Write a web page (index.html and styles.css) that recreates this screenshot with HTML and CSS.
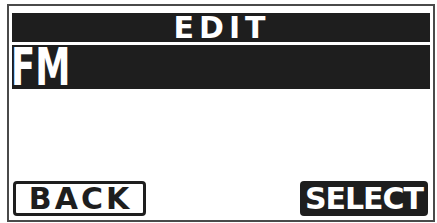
FILE: index.html
```html
<!DOCTYPE html>
<html>
<head>
<meta charset="utf-8">
<link rel="stylesheet" href="styles.css">
</head>
<body>
<div class="frame">
  <div class="title">EDIT</div>
  <div class="item"><span class="item-text">FM</span></div>
  <div class="buttons">
    <div class="btn btn-back">BACK</div>
    <div class="btn btn-select">SELECT</div>
  </div>
</div>
</body>
</html>
```
FILE: styles.css
```css
html, body {
  margin: 0;
  padding: 0;
  background: #ffffff;
}
body {
  width: 437px;
  height: 223px;
  overflow: hidden;
  font-family: "DejaVu Sans", "Liberation Sans", sans-serif;
  font-weight: bold;
}
.frame {
  box-sizing: border-box;
  width: 428px;
  height: 218px;
  margin: 4px 0 0 7px;
  border: 2px solid #4a4a4a;
  padding: 7px 3px 4px 3px;
  display: flex;
  flex-direction: column;
  background: #fff;
}
.title {
  height: 29px;
  line-height: 29px;
  background: #1e1e1e;
  color: #fff;
  text-align: center;
  font-size: 30px;
  letter-spacing: 5px;
  padding-left: 2px;
}
.item {
  margin-top: 3px;
  height: 44px;
  background: #1e1e1e;
  color: #fff;
  display: flex;
  align-items: center;
}
.item-text {
  display: block;
  height: 44px;
  line-height: 44px;
  font-size: 52px;
  transform: scaleX(0.68);
  transform-origin: left center;
  margin-left: -1px;
}
.buttons {
  margin-top: auto;
  display: flex;
  justify-content: space-between;
  padding: 0 2px 0 1px;
}
.btn {
  box-sizing: border-box;
  height: 35px;
  line-height: 35px;
  text-align: center;
  border-radius: 4px;
}
.btn-back {
  width: 133px;
  border: 3px solid #1e1e1e;
  line-height: 29px;
  color: #1e1e1e;
  font-size: 30px;
  letter-spacing: 3px;
  padding-left: 2px;
}
.btn-select {
  width: 128px;
  background: #1e1e1e;
  color: #fff;
  font-size: 30px;
  letter-spacing: -1px;
}
```
